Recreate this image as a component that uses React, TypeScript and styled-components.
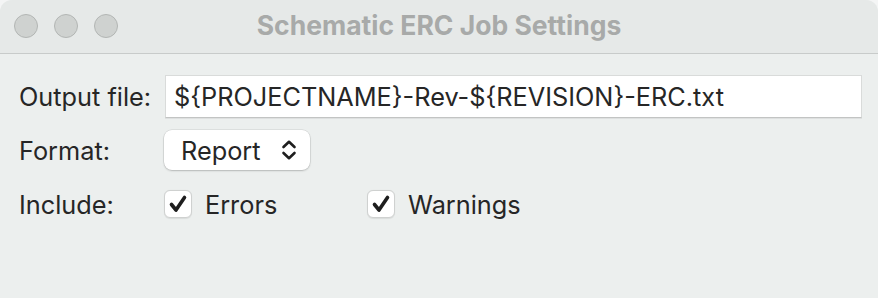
import React from "react";
import styled, { createGlobalStyle } from "styled-components";

const Global = createGlobalStyle`
  html, body { margin: 0; padding: 0; background: #f4f5f5; }
  body { font-family: Inter, "Noto Sans", "Liberation Sans", sans-serif; -webkit-font-smoothing: antialiased; }
  * { box-sizing: border-box; }
`;

const Window = styled.div`
  width: 878px;
  height: 298px;
  background: #ecefee;
  border-radius: 12px 12px 0 0;
  overflow: hidden;
  display: flex;
  flex-direction: column;
`;

const TitleBar = styled.div`
  height: 54px;
  flex: none;
  background: #e6e9e8;
  border-bottom: 1px solid #c8cbca;
  display: flex;
  align-items: center;
  position: relative;
  padding-left: 14px;
`;

const Lights = styled.div`
  display: flex;
  gap: 16px;
  margin-top: -2px;
`;

const Light = styled.span`
  width: 24px;
  height: 24px;
  border-radius: 50%;
  background: #cfd2d0;
  border: 1px solid #b3b6b4;
`;

const Title = styled.div`
  position: absolute;
  left: 0;
  right: 0;
  top: 0;
  bottom: 0;
  display: flex;
  align-items: center;
  justify-content: center;
  font-size: 26.5px;
  font-weight: 700;
  color: #a8aaa9;
  margin-top: -3px;
  pointer-events: none;
`;

const Form = styled.div`
  display: grid;
  grid-template-columns: 145px 1fr;
  grid-template-rows: 43px 40px 44px;
  row-gap: 12px;
  padding: 21px 16px 0 19px;
  align-items: center;
  color: #262626;
  font-size: 25.3px;
`;

const Label = styled.div`
  white-space: nowrap;
`;

const Field = styled.div`
  height: 43px;
  background: #ffffff;
  border: 1px solid #d9dbda;
  border-bottom-color: #c2c4c3;
  box-shadow: 0 1px 0 rgba(0, 0, 0, 0.06);
  display: flex;
  align-items: center;
  padding-left: 8px;
  margin-left: 1px;
`;

const Popup = styled.div`
  width: 146px;
  height: 40px;
  background: #ffffff;
  border-radius: 8px;
  box-shadow: 0 0 0 0.5px rgba(0, 0, 0, 0.12), 0 1px 2px rgba(0, 0, 0, 0.18);
  display: flex;
  align-items: center;
  justify-content: space-between;
  padding: 0 13px 0 17px;
`;

const Checks = styled.div`
  display: grid;
  grid-template-columns: 203px auto;
  align-items: center;
`;

const CheckItem = styled.label`
  display: flex;
  align-items: center;
  gap: 13px;
`;

const Box = styled.span`
  width: 28px;
  height: 28px;
  border-radius: 6px;
  background: #ffffff;
  border: 1px solid #cfd1d0;
  box-shadow: 0 0.5px 1px rgba(0, 0, 0, 0.08);
  display: flex;
  align-items: center;
  justify-content: center;
`;

const Check = () => (
  <svg width="20" height="20" viewBox="0 0 20 20">
    <path d="M3.5 10.5 L8 16 L16.5 3.5" fill="none" stroke="#1e1e1e" strokeWidth="3.6" strokeLinecap="round" strokeLinejoin="round" />
  </svg>
);

const Chevrons = () => (
  <svg width="16" height="22" viewBox="0 0 16 22">
    <path d="M2.5 8 L8 2.8 L13.5 8" fill="none" stroke="#1e1e1e" strokeWidth="2.6" strokeLinecap="round" strokeLinejoin="round" />
    <path d="M2.5 14 L8 19.2 L13.5 14" fill="none" stroke="#1e1e1e" strokeWidth="2.6" strokeLinecap="round" strokeLinejoin="round" />
  </svg>
);

export default function App() {
  return (
    <>
      <Global />
      <Window>
        <TitleBar>
          <Lights>
            <Light />
            <Light />
            <Light />
          </Lights>
          <Title>Schematic ERC Job Settings</Title>
        </TitleBar>
        <Form>
          <Label>Output file:</Label>
          <Field>{"${PROJECTNAME}-Rev-${REVISION}-ERC.txt"}</Field>
          <Label>Format:</Label>
          <Popup>
            <span>Report</span>
            <Chevrons />
          </Popup>
          <Label>Include:</Label>
          <Checks>
            <CheckItem>
              <Box><Check /></Box>
              <span>Errors</span>
            </CheckItem>
            <CheckItem>
              <Box><Check /></Box>
              <span>Warnings</span>
            </CheckItem>
          </Checks>
        </Form>
      </Window>
    </>
  );
}
